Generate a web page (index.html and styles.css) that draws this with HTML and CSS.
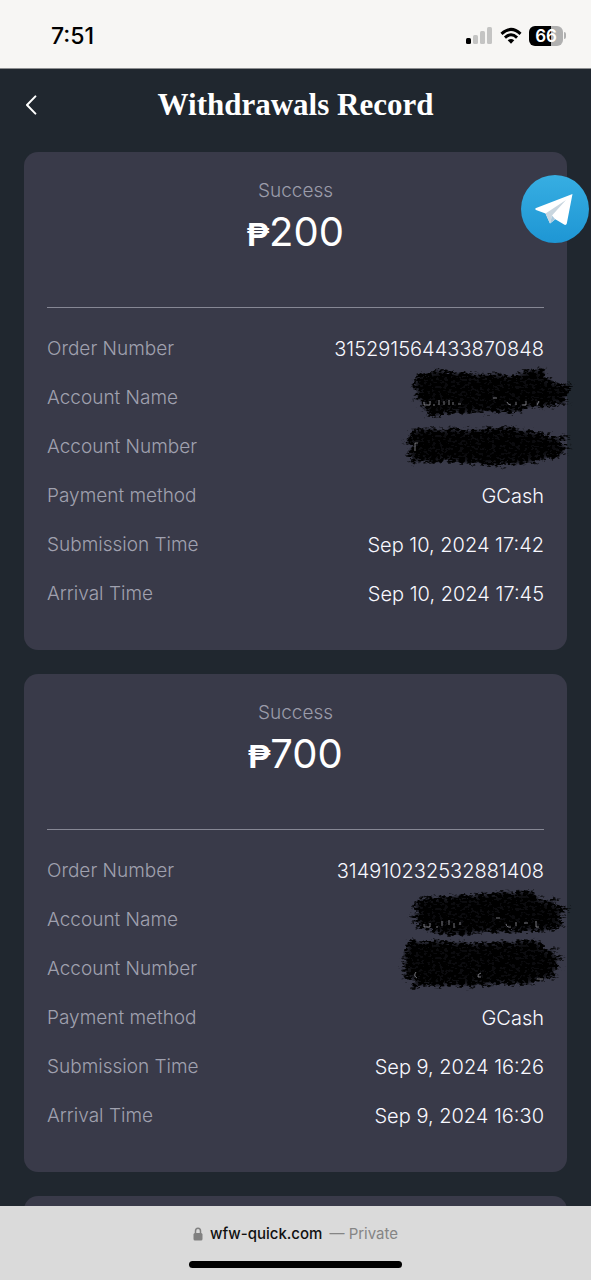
FILE: index.html
```html
<!DOCTYPE html>
<html lang="en">
<head>
<meta charset="utf-8">
<meta name="viewport" content="width=device-width, initial-scale=1">
<title>Withdrawals Record</title>
<link rel="stylesheet" href="styles.css">
</head>
<body>
<div class="statusbar">
  <span class="clock">7:51</span>
  <div class="indicators">
    <svg class="signal" viewBox="0 0 27 18" aria-hidden="true">
      <rect x="0" y="11" width="5" height="6" rx="1.5" fill="#000"/>
      <rect x="7" y="8" width="5" height="9" rx="1.5" fill="#c4c4c3"/>
      <rect x="14" y="4" width="5" height="13" rx="1.5" fill="#c4c4c3"/>
      <rect x="21" y="0" width="5" height="17" rx="1.5" fill="#c4c4c3"/>
    </svg>
    <svg class="wifi" viewBox="0 0 24 18" aria-hidden="true">
      <g fill="none" stroke="#000" stroke-width="3.2">
        <path d="M1.6 6.6Q12 -3 22.4 6.6"/>
        <path d="M5.4 10.8Q12 4.6 18.6 10.8"/>
      </g>
      <path d="M8.4 13.7Q12 10.6 15.6 13.7L12 17.4Z"/>
    </svg>
    <div class="battery"><span class="level">66</span><span class="cap"></span></div>
  </div>
</div>

<main class="page">
  <header class="titlebar">
    <button class="back" type="button" aria-label="Back">
      <svg viewBox="0 0 12 20" aria-hidden="true"><path d="M10.4 1.4L2 10l8.4 8.6" fill="none" stroke="#fff" stroke-width="2" stroke-linecap="round" stroke-linejoin="round"/></svg>
    </button>
    <h1 class="title">Withdrawals Record</h1>
  </header>

  <div class="records">
    <section class="card">
      <p class="state">Success</p>
      <p class="amount"><span class="peso">₱</span>200</p>
      <dl class="details">
        <div class="row"><dt>Order Number</dt><dd>315291564433870848</dd></div>
        <div class="row"><dt>Account Name</dt><dd class="hidden-value">
          <svg class="scribble" viewBox="0 0 176 64" aria-label="Hidden">
            <g filter="url(#brush)"><path d="M8 19L16 5L38 0L70 3L105 5L133 1L148 -3L143 5L156 8L150 13L175 15L168 21L175 27L162 29L173 34L150 39L128 40L118 45L90 45L60 45L34 48L22 51L29 43L15 39L22 33L11 29L17 23Z"/></g>
            <g class="traces"><path d="M24 33v3h6v-4M34 35v2M39 31v5M44 32v4M49 31v5M53 33v3M58 35h3M93 29h4M107 33q1 3 4 3M116 33v3M122 36h4v-4M139 32l-2 4"/></g>
          </svg></dd></div>
        <div class="row"><dt>Account Number</dt><dd class="hidden-value">
          <svg class="scribble" viewBox="0 0 176 64" aria-label="Hidden">
            <g filter="url(#brush)"><path d="M0 24L10 18L7 11L30 9L62 10L96 9L132 10L136 14L154 14L147 19L171 16L163 24L173 29L160 32L171 38L150 41L130 47L100 49L72 47L48 45L27 45L5 46L15 39L4 36L11 30Z"/></g>
            <g class="traces"><path d="M18 25h-3v8"/></g>
          </svg></dd></div>
        <div class="row"><dt>Payment method</dt><dd>GCash</dd></div>
        <div class="row"><dt>Submission Time</dt><dd>Sep 10, 2024 17:42</dd></div>
        <div class="row"><dt>Arrival Time</dt><dd>Sep 10, 2024 17:45</dd></div>
      </dl>
    </section>

    <section class="card">
      <p class="state">Success</p>
      <p class="amount"><span class="peso">₱</span>700</p>
      <dl class="details">
        <div class="row"><dt>Order Number</dt><dd>314910232532881408</dd></div>
        <div class="row"><dt>Account Name</dt><dd class="hidden-value">
          <svg class="scribble" viewBox="0 0 176 64" aria-label="Hidden">
            <g filter="url(#brush)"><path d="M9 14L19 6L46 4L82 2L100 0L133 -2L138 6L162 8L152 13L173 16L160 22L170 26L158 29L168 36L140 42L110 42L78 43L46 46L32 40L12 38L19 32L5 27L16 21Z"/></g>
            <g class="traces"><path d="M24 33v3h6v-4M37 35v2M42 30v5M49 29v5M54 32v5M60 31v3M96 27h4M106 33q1 4 5 3M116 31v4M124 32h4M136 30v6h3"/></g>
          </svg></dd></div>
        <div class="row"><dt>Account Number</dt><dd class="hidden-value">
          <svg class="scribble" viewBox="0 0 176 64" aria-label="Hidden">
            <g filter="url(#brush)"><path d="M3 12L7 0L40 0L82 2L122 -1L138 0L146 7L163 9L152 14L167 17L155 22L167 27L153 31L161 37L142 41L128 46L96 46L62 48L30 47L7 51L14 42L0 40L7 33L-1 28L5 23L0 19Z"/></g>
            <g class="traces"><path d="M16 32q-3 4 1 6M81 33q-4 1-3 4h3M137 39h6"/></g>
          </svg></dd></div>
        <div class="row"><dt>Payment method</dt><dd>GCash</dd></div>
        <div class="row"><dt>Submission Time</dt><dd>Sep 9, 2024 16:26</dd></div>
        <div class="row"><dt>Arrival Time</dt><dd>Sep 9, 2024 16:30</dd></div>
      </dl>
    </section>

    <section class="card"></section>
  </div>
</main>

<a class="telegram" href="#" aria-label="Telegram">
  <svg viewBox="0 0 68 68" aria-hidden="true">
    <defs><linearGradient id="sky" x1="0" y1="0" x2="0" y2="1"><stop offset="0" stop-color="#37aee2"/><stop offset="1" stop-color="#1e96d4"/></linearGradient></defs>
    <circle cx="34" cy="34" r="34" fill="url(#sky)"/>
    <path d="M51.500 19L14.500 33.300Q13.800 34.300 15 35L24.500 38.500L29 48.500L34.300 44.200L43.500 49.800Q45.300 50.300 45.800 48.500Z" fill="#fff"/>
    <path d="M24.500 38.500L45 25L31 40.500L29 48.500Z" fill="#c9d6df"/>
    <path d="M29 48.500L31 40.500L34.300 44.200Z" fill="#a9c9dd"/>
  </svg>
</a>

<footer class="browserbar">
  <div class="address">
    <svg class="lock" viewBox="0 0 10 14" aria-hidden="true"><path d="M2.500 7V4a2.500 2.800 0 0 1 5 0v3" fill="none" stroke="#808080" stroke-width="1.500"/><rect x="0.500" y="6" width="9" height="7.500" rx="1.500" fill="#808080"/></svg>
    <span class="domain">wfw-quick.com</span>
    <span class="private">— Private</span>
  </div>
  <div class="home"></div>
</footer>

<svg class="defs" aria-hidden="true">
  <filter id="brush" x="-5%" y="-15%" width="110%" height="130%" color-interpolation-filters="sRGB">
    <feTurbulence type="fractalNoise" baseFrequency="0.12 0.3" numOctaves="3" seed="4" result="noise"/>
    <feDisplacementMap in="SourceGraphic" in2="noise" scale="12" xChannelSelector="R" yChannelSelector="G" result="rough"/>
    <feGaussianBlur in="rough" stdDeviation="3" result="soft"/>
    <feTurbulence type="fractalNoise" baseFrequency="0.25 0.4" numOctaves="2" seed="9" result="grain"/>
    <feColorMatrix in="grain" values="0 0 0 0 0  0 0 0 0 0  0 0 0 0 0  0 0 0 5 -2" result="specks"/>
    <feComposite in="soft" in2="specks" operator="arithmetic" k1="0" k2="1.9" k3="0.9" k4="-1.1" result="dry"/>
    <feComposite in="dry" in2="rough" operator="in"/>
  </filter>
</svg>
</body>
</html>
```
FILE: styles.css
```css
* { box-sizing: border-box; margin: 0; padding: 0; }

body {
  display: flex;
  flex-direction: column;
  height: 100vh;
  background: #20272f;
  color: #f8f8ff;
  font-family: Inter, "Liberation Sans", sans-serif;
  font-size: 19px;
}

.statusbar {
  flex: none;
  display: flex;
  align-items: center;
  justify-content: space-between;
  height: 69px;
  padding: 3px 25px 0 51px;
  border-bottom: 1px solid #8d8e90;
  background: #f7f6f4;
  color: #000;
}
.clock { font-size: 23px; font-weight: 500; }
.indicators { display: flex; align-items: center; gap: 7px; }
.signal { width: 27px; height: 18px; }
.wifi { width: 22px; height: 18px; }
.battery { display: flex; align-items: center; gap: 1px; }
.level {
  width: 34px;
  border-radius: 6px;
  background: linear-gradient(90deg, #000 66%, #b0b0b0 66%);
  color: #fff;
  font-size: 17px;
  font-weight: 600;
  line-height: 20px;
  text-align: center;
}
.cap { width: 2px; height: 7px; border-radius: 0 2px 2px 0; background: #b0b0b0; }

.page {
  flex: 1;
  min-height: 0;
  overflow-y: auto;
  scrollbar-width: none;
}
.titlebar {
  display: grid;
  grid-template-columns: 48px 1fr 48px;
  align-items: center;
  height: 72px;
}
.back {
  justify-self: start;
  padding: 4px 11px 4px 25px;
  border: 0;
  background: none;
  cursor: pointer;
}
.back svg { display: block; width: 12px; height: 20px; }
.title {
  color: #fff;
  font-family: "Liberation Serif", serif;
  font-size: 31px;
  text-align: center;
}

.records {
  display: flex;
  flex-direction: column;
  gap: 24px;
  padding: 11px 24px 24px;
}
.card {
  min-height: 498px;
  padding: 24px 23px 32px;
  border-radius: 14px;
  background: #393a49;
}
.state { color: #9b9caa; font-weight: 300; line-height: 30px; text-align: center; }
.amount {
  display: flex;
  align-items: baseline;
  justify-content: center;
  height: 52px;
  color: #fff;
  font-size: 40px;
  line-height: 52px;
}
.peso { font-family: "Liberation Sans", sans-serif; font-size: 33px; font-weight: 700; line-height: 40px; }
.details { margin-top: 49px; padding-top: 16px; border-top: 1px solid #868794; }
.row {
  display: flex;
  align-items: center;
  justify-content: space-between;
  height: 49px;
}
.row dt { color: #a0a1af; font-weight: 300; }
.row dd { font-size: 20px; font-weight: 300; }
.hidden-value { position: relative; align-self: stretch; }
.scribble {
  position: absolute;
  top: -4px;
  right: -32px;
  width: 176px;
  height: 64px;
  overflow: visible;
}
.traces { fill: none; stroke: #a5a5ae; stroke-width: 1; opacity: 0.7; }

.telegram { position: fixed; top: 175px; right: 2px; width: 68px; height: 68px; }
.telegram svg { display: block; }

.browserbar {
  flex: none;
  display: flex;
  flex-direction: column;
  align-items: center;
  justify-content: space-between;
  height: 74px;
  padding: 18px 0 12px;
  background: #dadada;
  color: #111;
}
.address { display: flex; align-items: center; gap: 7px; font-size: 15px; line-height: 20px; }
.domain { font-weight: 500; }
.lock { width: 10px; height: 14px; }
.private { color: #858585; }
.home { width: 36%; height: 7px; border-radius: 4px; background: #000; }

.defs { position: absolute; width: 0; height: 0; }
```
